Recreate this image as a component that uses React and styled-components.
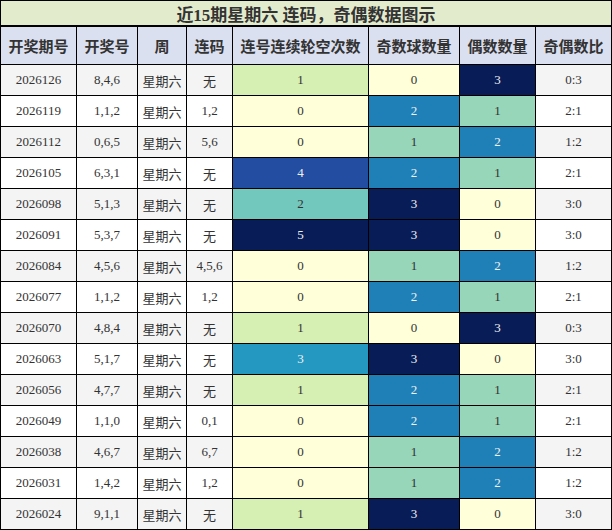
import React from "react";
import styled, { createGlobalStyle } from "styled-components";

const Global = createGlobalStyle`
  html, body { margin: 0; padding: 0; background: #fff; }
  body { font-family: "Liberation Serif", "Noto Sans CJK SC", serif; }
`;

const Frame = styled.div`
  width: 612px;
  box-sizing: border-box;
  border-left: 1px solid #000;
  border-top: 1px solid #000;
`;

const Title = styled.div`
  height: 24px;
  border-right: 1px solid #000;
  border-bottom: 2px solid #000;
  background: #e3ebcd;
  display: flex;
  align-items: center;
  justify-content: center;
  font-size: 17px;
  font-weight: bold;
  color: #333;
`;

const Grid = styled.div`
  display: grid;
  grid-template-columns: 76px 61px 49px 46px 136px 91px 76px 76px;
`;

const Cell = styled.div`
  box-sizing: border-box;
  height: ${(p) => (p.$head ? 38 : 31)}px;
  border-right: 1px solid #000;
  border-bottom: 1px solid #000;
  display: flex;
  align-items: center;
  justify-content: center;
  white-space: nowrap;
  font-size: ${(p) => (p.$head ? 15 : 13)}px;
  font-weight: ${(p) => (p.$head ? "bold" : "normal")};
  color: ${(p) => p.$fg || "#333"};
  background: ${(p) => p.$bg || "#fff"};
`;

const rows = [
  ["2026126", "8,4,6", "无", 1, 0, 3, "0:3"],
  ["2026119", "1,1,2", "1,2", 0, 2, 1, "2:1"],
  ["2026112", "0,6,5", "5,6", 0, 1, 2, "1:2"],
  ["2026105", "6,3,1", "无", 4, 2, 1, "2:1"],
  ["2026098", "5,1,3", "无", 2, 3, 0, "3:0"],
  ["2026091", "5,3,7", "无", 5, 3, 0, "3:0"],
  ["2026084", "4,5,6", "4,5,6", 0, 1, 2, "1:2"],
  ["2026077", "1,1,2", "1,2", 0, 2, 1, "2:1"],
  ["2026070", "4,8,4", "无", 1, 0, 3, "0:3"],
  ["2026063", "5,1,7", "无", 3, 3, 0, "3:0"],
  ["2026056", "4,7,7", "无", 1, 2, 1, "2:1"],
  ["2026049", "1,1,0", "0,1", 0, 2, 1, "2:1"],
  ["2026038", "4,6,7", "6,7", 0, 1, 2, "1:2"],
  ["2026031", "1,4,2", "1,2", 0, 1, 2, "1:2"],
  ["2026024", "9,1,1", "无", 1, 3, 0, "3:0"],
];

const heads = ["开奖期号", "开奖号", "周", "连码", "连号连续轮空次数", "奇数球数量", "偶数数量", "奇偶数比"];

const scale5 = ["#ffffd9", "#d6efb3", "#73c8bd", "#2498c1", "#234da0", "#081d58"];
const scale3 = ["#ffffd9", "#97d6b9", "#1f80b8", "#081d58"];
const darkText = (v, max) => (max === 5 ? v >= 3 : v >= 2);

const Heat = ({ v, max }) => {
  const pal = max === 5 ? scale5 : scale3;
  return (
    <Cell $bg={pal[v]} $fg={darkText(v, max) ? "#f0f0f0" : "#333"}>
      {v}
    </Cell>
  );
};

export default function App() {
  return (
    <>
      <Global />
      <Frame>
        <Title>近15期星期六 连码，奇偶数据图示</Title>
        <Grid>
          {heads.map((h) => (
            <Cell key={h} $head $bg="#dbe0f0">
              {h}
            </Cell>
          ))}
          {rows.map((r, i) => {
            const bg = i % 2 === 0 ? "#f4f4f4" : "#fff";
            return (
              <React.Fragment key={r[0]}>
                <Cell $bg={bg}>{r[0]}</Cell>
                <Cell $bg={bg}>{r[1]}</Cell>
                <Cell $bg={bg}>星期六</Cell>
                <Cell $bg={bg}>{r[2]}</Cell>
                <Heat v={r[3]} max={5} />
                <Heat v={r[4]} max={3} />
                <Heat v={r[5]} max={3} />
                <Cell $bg={bg}>{r[6]}</Cell>
              </React.Fragment>
            );
          })}
        </Grid>
      </Frame>
    </>
  );
}
